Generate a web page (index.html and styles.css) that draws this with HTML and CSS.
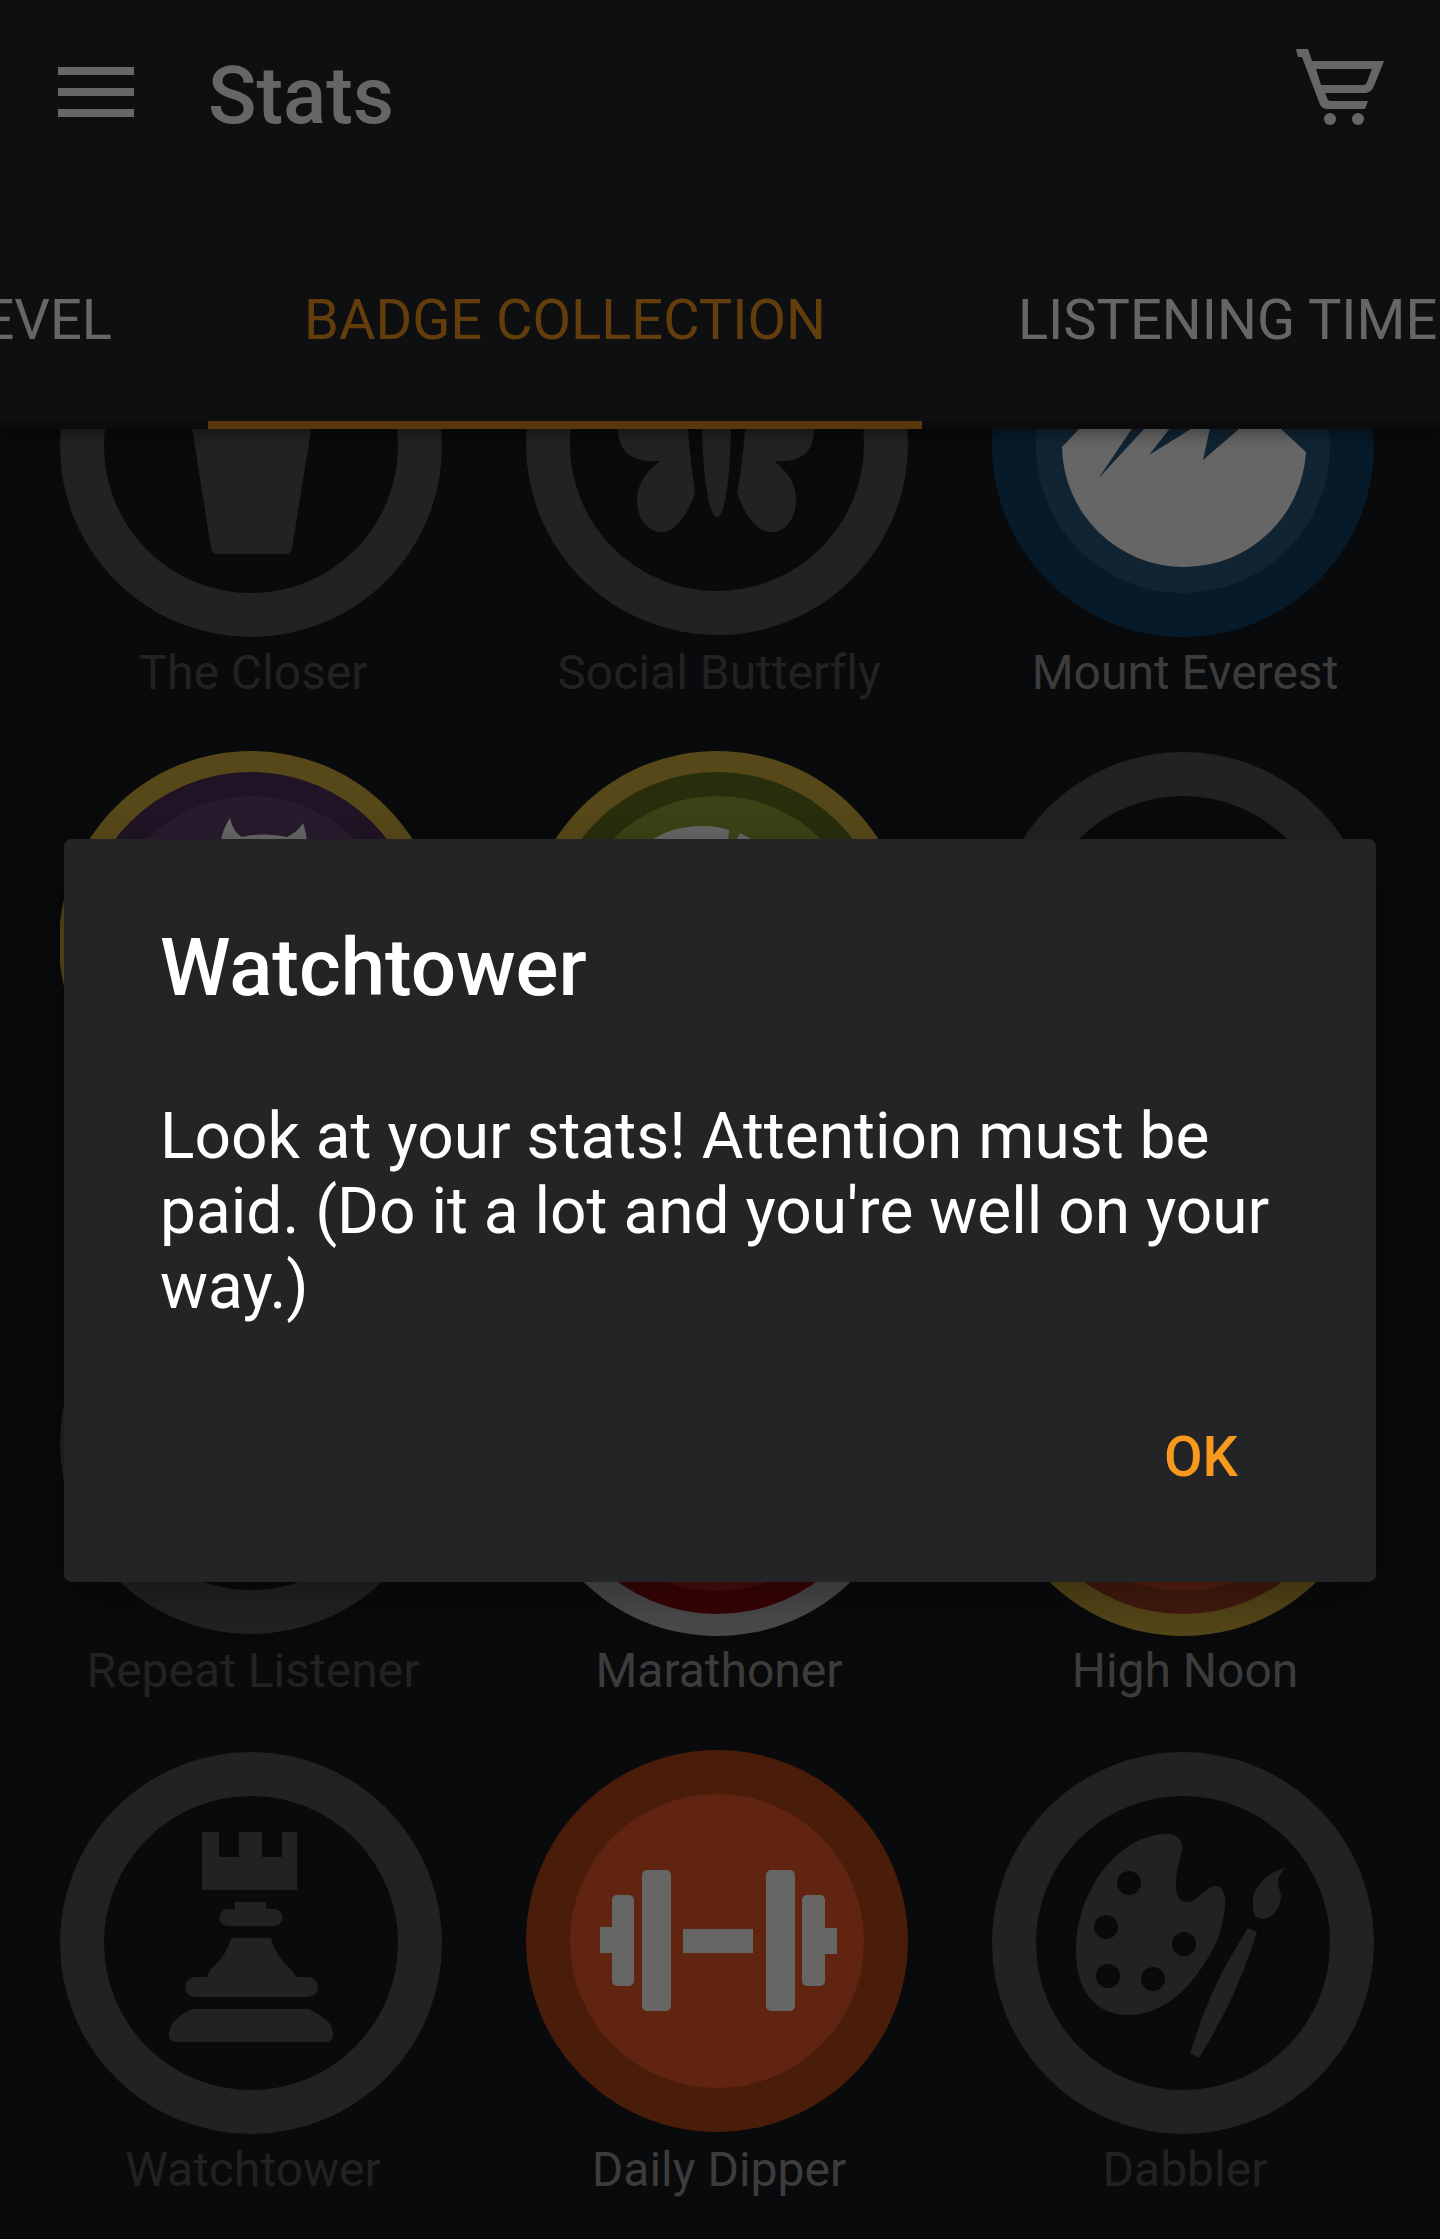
FILE: index.html
```html
<!DOCTYPE html>
<html lang="en">
<head>
<meta charset="utf-8">
<meta name="viewport" content="width=device-width, initial-scale=1">
<title>Stats</title>
<link rel="stylesheet" href="styles.css">
</head>
<body>
<div class="app">
  <header class="header">
    <div class="appbar">
      <button class="icon-button" type="button" aria-label="Menu">
        <svg class="icon-menu" viewBox="0 0 76 50" aria-hidden="true"><path d="M0 0h76v8H0zM0 21h76v8H0zM0 42h76v8H0z"/></svg>
      </button>
      <h1 class="title">Stats</h1>
      <button class="icon-button icon-button-cart" type="button" aria-label="Cart">
        <svg class="icon-cart" viewBox="6 9 88 76" aria-hidden="true">
          <path fill-rule="evenodd" d="M6 9H18L22 21H94L84 46Q81 53 75 53H35L37 58Q38 61 41 61H78L75 69H37Q31 69 29 62L12 17H8ZM26 29L31 45H73Q76 45 77 42L82 29Z"/>
          <circle cx="40" cy="79" r="6"/><circle cx="68" cy="79" r="6"/>
        </svg>
      </button>
    </div>
    <nav class="tabs">
      <a class="tab tab-first" href="#level">LEVEL</a>
      <a class="tab tab-active" href="#badges" aria-current="page">BADGE COLLECTION</a>
      <a class="tab" href="#time">LISTENING TIME</a>
    </nav>
  </header>

  <main class="content">
    <ul class="badges">
      <li class="badge locked">
        <svg class="art" viewBox="0 0 386 388" aria-hidden="true">
          <circle class="ring" cx="191" cy="195" r="169"/>
          <path d="M120 100H264L232 297Q231 303 226 303H157Q152 303 151 297Z"/>
        </svg>
        <span class="label">The Closer</span>
      </li>
      <li class="badge locked">
        <svg class="art" viewBox="0 0 386 388" aria-hidden="true">
          <circle class="ring" cx="191" cy="193" r="169"/>
          <path d="M176 178C177 220 182 266 191 266S204 220 205 178Q204 140 191 130Q178 140 176 178Z"/>
          <path d="M92 178C92 202 108 212 134 210C118 222 111 235 111 249C111 267 121 281 136 281C152 281 163 259 169 242Q164 210 162 178L155 150L80 130Z"/>
          <path d="M288 178C288 202 274 212 248 210C264 222 270 235 270 249C270 267 260 281 245 281C229 281 217 259 211 242Q217 210 219 178L226 150L300 130Z"/>
        </svg>
        <span class="label">Social Butterfly</span>
      </li>
      <li class="badge">
        <svg class="art" viewBox="0 0 386 388" aria-hidden="true">
          <circle fill="#0f4169" cx="191" cy="195" r="191"/>
          <circle fill="#2a5a7f" cx="191" cy="195" r="147"/>
          <path fill="#fff" d="M191 80L87 178L70 196A122 122 0 0 0 192 316A122 122 0 0 0 314 201L289 178Z"/>
          <path fill="#2a5a7f" d="M172 130L106 228L152 178L199 130ZM199 150L157 204L199 178L240 148ZM226 140L211 209L247 178L280 148Z"/>
        </svg>
        <span class="label">Mount Everest</span>
      </li>

      <li class="badge">
        <svg class="art" viewBox="0 0 386 388" aria-hidden="true">
          <circle fill="#d7b43c" cx="191" cy="193" r="192"/>
          <circle fill="#4e305c" cx="191" cy="193" r="171"/>
          <circle fill="#644273" cx="191" cy="193" r="147"/>
          <path fill="#fff" d="M160 94Q163 78 170 68Q173 82 182 87Q205 82 227 87Q238 82 243 73Q247 84 247 94Z"/>
        </svg>
      </li>
      <li class="badge">
        <svg class="art" viewBox="0 0 386 388" aria-hidden="true">
          <circle fill="#d7b43c" cx="191" cy="193" r="192"/>
          <circle fill="#64701e" cx="191" cy="193" r="171"/>
          <circle fill="#92a637" cx="191" cy="193" r="147"/>
          <path fill="#fff" d="M120 94Q143 76 177 76Q191 76 203 80L202 94ZM214 83L234 94H208Z"/>
        </svg>
      </li>
      <li class="badge locked">
        <svg class="art" viewBox="0 0 386 388" aria-hidden="true">
          <circle class="ring" cx="191" cy="193" r="169"/>
        </svg>
      </li>

      <li class="badge locked">
        <svg class="art" viewBox="0 0 386 388" aria-hidden="true">
          <circle class="ring" cx="191" cy="194" r="169"/>
        </svg>
        <span class="label">Repeat Listener</span>
      </li>
      <li class="badge">
        <svg class="art" viewBox="0 0 386 388" aria-hidden="true">
          <circle fill="#b9b9be" cx="191" cy="195" r="192"/>
          <circle fill="#8c0a0a" cx="191" cy="195" r="170"/>
          <circle fill="#b42323" cx="191" cy="195" r="147"/>
        </svg>
        <span class="label">Marathoner</span>
      </li>
      <li class="badge">
        <svg class="art" viewBox="0 0 386 388" aria-hidden="true">
          <circle fill="#d2af3c" cx="191" cy="195" r="192"/>
          <circle fill="#a54123" cx="191" cy="195" r="170"/>
          <circle fill="#d75023" cx="191" cy="195" r="147"/>
        </svg>
        <span class="label">High Noon</span>
      </li>

      <li class="badge locked">
        <svg class="art" viewBox="0 0 386 388" aria-hidden="true">
          <circle class="ring" cx="191" cy="195" r="169"/>
          <path d="M142 84H159V109H179V84H202V109H222V84H237V142H142Z"/>
          <path d="M175 154H206V161H214A8 8 0 0 1 214 178H168A8 8 0 0 1 168 161H175Z"/>
          <path d="M171 190H211C217 214 231 217 236 229H248A10 10 0 0 1 248 249H135A10 10 0 0 1 135 229H147C150 217 165 214 171 190Z"/>
          <path d="M133 261H249C262 268 273 274 273 287Q273 294 266 294H116Q109 294 109 287C109 274 120 266 133 261Z"/>
        </svg>
        <span class="label">Watchtower</span>
      </li>
      <li class="badge">
        <svg class="art" viewBox="0 0 386 388" aria-hidden="true">
          <circle fill="#b94619" cx="191" cy="193" r="191"/>
          <circle fill="#f05a28" cx="191" cy="193" r="147"/>
          <g fill="#fff">
            <path d="M74 179H90V205H74ZM157 181H227V205H157ZM295 180H311V206H295Z"/>
            <rect x="86" y="147" width="22" height="91" rx="5"/>
            <rect x="116" y="122" width="29" height="141" rx="5"/>
            <rect x="240" y="122" width="29" height="141" rx="5"/>
            <rect x="276" y="147" width="23" height="91" rx="5"/>
          </g>
        </svg>
        <span class="label">Daily Dipper</span>
      </li>
      <li class="badge locked">
        <svg class="art" viewBox="0 0 386 388" aria-hidden="true">
          <circle class="ring" cx="191" cy="195" r="169"/>
          <path d="M175 86C186 86 191 92 190 102C188 113 184 121 184 138C184 149 188 154 195 154C206 154 213 138 224 138C231 139 234 146 233 158C231 178 226 196 212 216C194 245 168 267 136 267C104 267 84 243 84 204C84 138 130 86 175 86Z"/>
          <g class="holes">
            <circle cx="137" cy="135" r="12"/><circle cx="114" cy="179" r="12"/><circle cx="192" cy="196" r="12"/><circle cx="116" cy="228" r="12"/><circle cx="161" cy="231" r="12"/>
          </g>
          <path d="M293 120C271 126 259 143 261 156Q261 164 263 168Q267 171 271 171C281 170 289 159 289 149C289 143 286 140 286 134Q287 126 293 120ZM256 180L265 184C248 235 238 258 207 310L198 305C216 251 226 228 256 180Z"/>
        </svg>
        <span class="label">Dabbler</span>
      </li>
    </ul>
  </main>
</div>

<div class="scrim">
  <section class="dialog" role="dialog" aria-modal="true" aria-labelledby="dialog-title">
    <h2 class="dialog-title" id="dialog-title">Watchtower</h2>
    <p class="dialog-text">Look at your stats! Attention must be paid. (Do it a lot and you're well on your way.)</p>
    <div class="dialog-actions">
      <button class="dialog-button" type="button">OK</button>
    </div>
  </section>
</div>
</body>
</html>
```

FILE: styles.css
```css
* {
  box-sizing: border-box;
}

body {
  margin: 0;
  background: #17191e;
  color: #fff;
  font-family: Roboto, "Liberation Sans", sans-serif;
  font-variant-ligatures: none;
}

button {
  border: 0;
  padding: 0;
  background: none;
  color: inherit;
  font: inherit;
}

.app {
  display: flex;
  flex-direction: column;
  height: 100vh;
}

.header {
  position: relative;
  flex: none;
  background: #21262b;
  box-shadow: 0 4px 16px rgba(0, 0, 0, 0.4);
}

.appbar {
  display: flex;
  align-items: center;
  height: 220px;
  padding: 0 56px 28px 58px;
}

.icon-button {
  display: flex;
  padding-bottom: 8px;
}

.icon-button-cart {
  padding-bottom: 18px;
}

.icon-button svg {
  fill: #fff;
}

.icon-menu {
  width: 76px;
  height: 50px;
}

.icon-cart {
  width: 88px;
  height: 76px;
}

.title {
  flex: 1;
  margin: 0 0 0 74px;
  font-size: 80px;
  font-weight: 500;
  line-height: 96px;
}

.tabs {
  display: flex;
  overflow: hidden;
}

.tab {
  flex: none;
  display: flex;
  align-items: center;
  height: 209px;
  padding: 0 96px 2px;
  border-bottom: 8px solid #1e1e1e;
  color: #fff;
  font-size: 56px;
  line-height: 66px;
  text-decoration: none;
  white-space: nowrap;
}

.tab-first {
  justify-content: flex-end;
  width: 208px;
}

.tab-active {
  border-bottom-color: #e1871e;
  color: #f8991d;
}

.content {
  flex: 1;
  min-height: 0;
  overflow: hidden;
}

.badges {
  display: grid;
  grid-template-columns: repeat(3, 1fr);
  grid-auto-rows: 499px;
  margin: -178px 0 0;
  padding: 0 22px 0 20px;
  list-style: none;
}

.badge {
  display: flex;
  flex-direction: column;
  align-items: center;
}

.art {
  flex: none;
  width: 386px;
  height: 388px;
}

.label {
  margin-top: 6px;
  color: #969696;
  font-size: 48px;
  line-height: 56px;
}

.locked .art {
  fill: #555;
}

.locked .ring {
  fill: none;
  stroke: #555;
  stroke-width: 44px;
}

.locked .holes {
  fill: #17191e;
}

.locked .label {
  color: #555;
}

.scrim {
  position: fixed;
  inset: 0;
  display: flex;
  align-items: center;
  padding: 182px 64px 0;
  background: rgba(0, 0, 0, 0.6);
}

.dialog {
  flex: 1;
  padding: 82px 96px 70px;
  border-radius: 8px;
  background: #222426;
  box-shadow: 0 16px 48px rgba(0, 0, 0, 0.3);
}

.dialog-title {
  margin: 0;
  font-size: 80px;
  font-weight: 500;
  line-height: 94px;
}

.dialog-text {
  margin: 84px 0 0;
  font-size: 64px;
  line-height: 75px;
}

.dialog-actions {
  display: flex;
  justify-content: flex-end;
  margin-top: 78px;
  padding-right: 42px;
}

.dialog-button {
  color: #f8991d;
  font-size: 56px;
  font-weight: 500;
  line-height: 110px;
}
```
